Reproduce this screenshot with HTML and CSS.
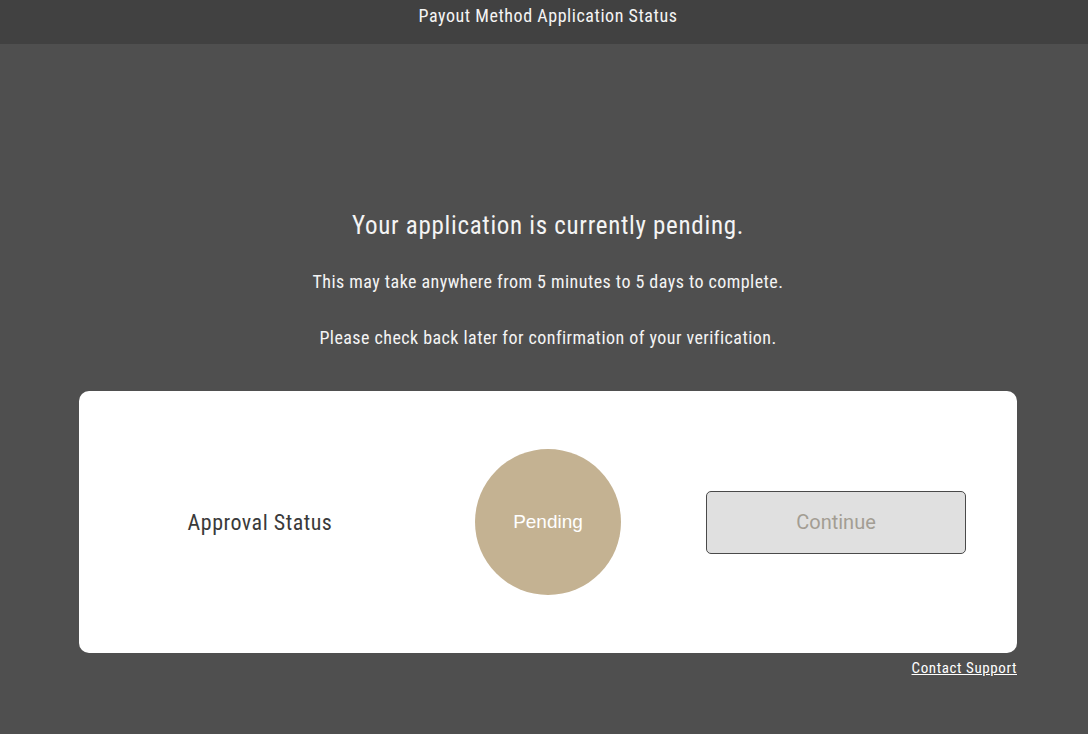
FILE: index.html
```html
<!DOCTYPE html>
<html>
<head>
<meta charset="utf-8">
<link rel="stylesheet" href="styles.css">
</head>
<body>
<header class="topbar">Payout Method Application Status</header>
<main class="content">
  <h1 class="title">Your application is currently pending.</h1>
  <p class="note">This may take anywhere from 5 minutes to 5 days to complete.</p>
  <p class="note">Please check back later for confirmation of your verification.</p>
  <section class="card">
    <div class="cell"><span class="label">Approval Status</span></div>
    <div class="cell"><div class="badge">Pending</div></div>
    <div class="cell"><button class="btn" disabled>Continue</button></div>
  </section>
  <div class="support-row"><a class="support" href="#">Contact Support</a></div>
</main>
</body>
</html>
```
FILE: styles.css
```css
html, body {
  margin: 0;
  padding: 0;
  height: 100%;
}
body {
  background: #4f4f4f;
  font-family: "Roboto Condensed", Roboto, "Liberation Sans", sans-serif;
  font-stretch: 87.5%;
  color: #f4f4f4;
  padding-left: 8px;
  box-sizing: border-box;
}
.topbar {
  margin-left: -8px;
  padding-left: 8px;
  background: #414141;
  display: flex;
  align-items: center;
  justify-content: center;
  font-size: 18px;
  letter-spacing: 0.55px;
  padding-bottom: 12px;
  box-sizing: border-box;
  height: 44px;
  line-height: 1;
}
.content {
  width: 938px;
  margin: 0 auto;
  padding-top: 166px;
  display: flex;
  flex-direction: column;
  align-items: center;
}
.title {
  margin: 0;
  font-weight: 400;
  font-size: 25px;
  line-height: 32px;
  letter-spacing: 0.7px;
}
.note {
  margin: 0;
  font-size: 18px;
  line-height: 24px;
  letter-spacing: 0.45px;
}
.title + .note { margin-top: 28px; }
.note + .note { margin-top: 32px; }
.card {
  align-self: stretch;
  margin-top: 41px;
  height: 262px;
  background: #fff;
  border-radius: 10px;
  padding: 0 37px;
  display: grid;
  grid-template-columns: 1fr 1fr 1fr;
  align-items: center;
}
.cell {
  display: flex;
  justify-content: center;
  align-items: center;
}
.label {
  font-size: 22px;
  letter-spacing: 0.5px;
  color: #3a3a3a;
}
.badge {
  width: 146px;
  height: 146px;
  border-radius: 50%;
  background: #c4b292;
  display: flex;
  align-items: center;
  justify-content: center;
  font-family: "Liberation Sans", Arial, sans-serif;
  font-stretch: normal;
  font-size: 19px;
  color: #fff;
}
.btn {
  width: 260px;
  height: 63px;
  background: #e0e0e0;
  border: 1px solid #4a4a4a;
  border-radius: 5px;
  font-family: Roboto, "Liberation Sans", sans-serif;
  font-stretch: normal;
  font-size: 20px;
  color: #a39d93;
  padding: 0;
}
.support-row {
  align-self: stretch;
  display: flex;
  justify-content: flex-end;
  margin-top: 6px;
}
.support {
  color: #fff;
  font-size: 15px;
  letter-spacing: 0.6px;
  text-decoration: underline;
}
```
